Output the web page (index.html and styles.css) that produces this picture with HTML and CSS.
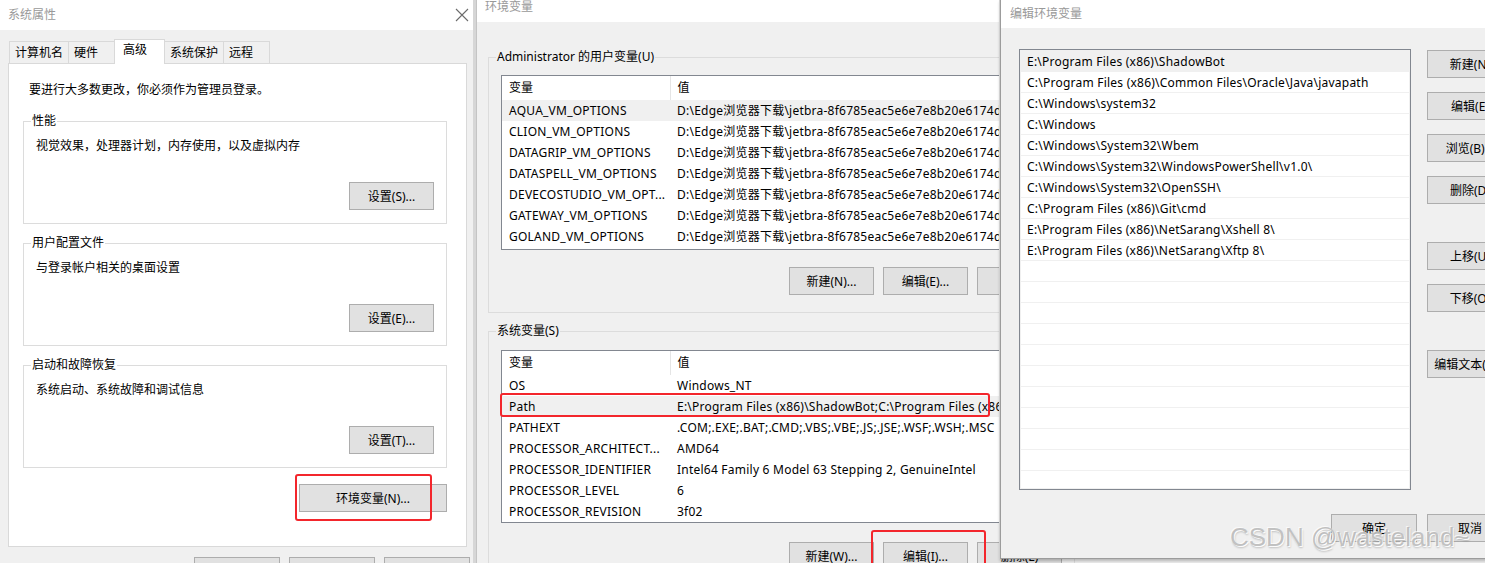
FILE: index.html
```html
<!DOCTYPE html>
<html lang="zh-CN">

<head>
    <meta charset="UTF-8">
    <meta name="viewport" content="width=device-width, initial-scale=1.0">
    <title>环境变量</title>
    <link rel="stylesheet" href="styles.css">
</head>

<body>
    <div class="desktop">

        <!-- 系统属性 -->
        <div class="window sysprops">
            <div class="titlebar">
                <span class="title">系统属性</span>
                <svg class="close" width="14" height="14" viewBox="0 0 14 14">
                    <path d="M1 1 L13 13 M13 1 L1 13" stroke="#6b6b6b" stroke-width="1.1" fill="none" />
                </svg>
            </div>
            <div class="body">
                <div class="tabs">
                    <div class="tab">计算机名</div>
                    <div class="tab">硬件</div>
                    <div class="tab active">高级</div>
                    <div class="tab">系统保护</div>
                    <div class="tab">远程</div>
                </div>
                <div class="tab-panel">
                    <p class="note">要进行大多数更改，你必须作为管理员登录。</p>

                    <fieldset class="group">
                        <legend>性能</legend>
                        <p>视觉效果，处理器计划，内存使用，以及虚拟内存</p>
                        <div class="actions"><button class="btn">设置(S)...</button></div>
                    </fieldset>

                    <fieldset class="group">
                        <legend>用户配置文件</legend>
                        <p>与登录帐户相关的桌面设置</p>
                        <div class="actions"><button class="btn">设置(E)...</button></div>
                    </fieldset>

                    <fieldset class="group">
                        <legend>启动和故障恢复</legend>
                        <p>系统启动、系统故障和调试信息</p>
                        <div class="actions"><button class="btn">设置(T)...</button></div>
                    </fieldset>

                    <div class="actions env-row"><button class="btn wide">环境变量(N)...</button></div>
                </div>
                <div class="dialog-buttons">
                    <button class="btn">确定</button>
                    <button class="btn">取消</button>
                    <button class="btn">应用(A)</button>
                </div>
            </div>
        </div>

        <!-- 环境变量 -->
        <div class="window envvars">
            <div class="titlebar short">
                <span class="title">环境变量</span>
            </div>
            <div class="body">
                <fieldset class="group">
                    <legend>Administrator 的用户变量(U)</legend>
                    <div class="listview user-list">
                        <table>
                            <thead>
                                <tr>
                                    <th class="col-name">变量</th>
                                    <th>值</th>
                                </tr>
                            </thead>
                            <tbody>
                                <tr class="selected">
                                    <td>AQUA_VM_OPTIONS</td>
                                    <td>D:\Edge浏览器下载\jetbra-8f6785eac5e6e7e8b20e6174dd28bb19d8\vmoptions\aqua.vmoptions</td>
                                </tr>
                                <tr>
                                    <td>CLION_VM_OPTIONS</td>
                                    <td>D:\Edge浏览器下载\jetbra-8f6785eac5e6e7e8b20e6174dd28bb19d8\vmoptions\clion.vmoptions</td>
                                </tr>
                                <tr>
                                    <td>DATAGRIP_VM_OPTIONS</td>
                                    <td>D:\Edge浏览器下载\jetbra-8f6785eac5e6e7e8b20e6174dd28bb19d8\vmoptions\datagrip.vmoptions</td>
                                </tr>
                                <tr>
                                    <td>DATASPELL_VM_OPTIONS</td>
                                    <td>D:\Edge浏览器下载\jetbra-8f6785eac5e6e7e8b20e6174dd28bb19d8\vmoptions\dataspell.vmoptions</td>
                                </tr>
                                <tr>
                                    <td>DEVECOSTUDIO_VM_OPT...</td>
                                    <td>D:\Edge浏览器下载\jetbra-8f6785eac5e6e7e8b20e6174dd28bb19d8\vmoptions\devecostudio.vmoptions</td>
                                </tr>
                                <tr>
                                    <td>GATEWAY_VM_OPTIONS</td>
                                    <td>D:\Edge浏览器下载\jetbra-8f6785eac5e6e7e8b20e6174dd28bb19d8\vmoptions\gateway.vmoptions</td>
                                </tr>
                                <tr>
                                    <td>GOLAND_VM_OPTIONS</td>
                                    <td>D:\Edge浏览器下载\jetbra-8f6785eac5e6e7e8b20e6174dd28bb19d8\vmoptions\goland.vmoptions</td>
                                </tr>
                            </tbody>
                        </table>
                    </div>
                    <div class="actions list-actions">
                        <button class="btn">新建(N)...</button>
                        <button class="btn">编辑(E)...</button>
                        <button class="btn">删除(D)</button>
                    </div>
                </fieldset>

                <fieldset class="group">
                    <legend>系统变量(S)</legend>
                    <div class="listview sys-list">
                        <table>
                            <thead>
                                <tr>
                                    <th class="col-name">变量</th>
                                    <th>值</th>
                                </tr>
                            </thead>
                            <tbody>
                                <tr>
                                    <td>OS</td>
                                    <td>Windows_NT</td>
                                </tr>
                                <tr class="selected">
                                    <td>Path</td>
                                    <td>E:\Program Files (x86)\ShadowBot;C:\Program Files (x86)\Common Files\Oracle\Java\javapath</td>
                                </tr>
                                <tr>
                                    <td>PATHEXT</td>
                                    <td>.COM;.EXE;.BAT;.CMD;.VBS;.VBE;.JS;.JSE;.WSF;.WSH;.MSC</td>
                                </tr>
                                <tr>
                                    <td>PROCESSOR_ARCHITECT...</td>
                                    <td>AMD64</td>
                                </tr>
                                <tr>
                                    <td>PROCESSOR_IDENTIFIER</td>
                                    <td>Intel64 Family 6 Model 63 Stepping 2, GenuineIntel</td>
                                </tr>
                                <tr>
                                    <td>PROCESSOR_LEVEL</td>
                                    <td>6</td>
                                </tr>
                                <tr>
                                    <td>PROCESSOR_REVISION</td>
                                    <td>3f02</td>
                                </tr>
                            </tbody>
                        </table>
                    </div>
                    <div class="actions list-actions">
                        <button class="btn">新建(W)...</button>
                        <button class="btn">编辑(I)...</button>
                        <button class="btn">删除(L)</button>
                    </div>
                </fieldset>
            </div>
        </div>

        <!-- 编辑环境变量 -->
        <div class="window editvar">
            <div class="titlebar tall">
                <span class="title">编辑环境变量</span>
            </div>
            <div class="body">
                <div class="edit-main">
                    <ul class="pathlist">
                        <li class="selected">E:\Program Files (x86)\ShadowBot</li>
                        <li>C:\Program Files (x86)\Common Files\Oracle\Java\javapath</li>
                        <li>C:\Windows\system32</li>
                        <li>C:\Windows</li>
                        <li>C:\Windows\System32\Wbem</li>
                        <li>C:\Windows\System32\WindowsPowerShell\v1.0\</li>
                        <li>C:\Windows\System32\OpenSSH\</li>
                        <li>C:\Program Files (x86)\Git\cmd</li>
                        <li>E:\Program Files (x86)\NetSarang\Xshell 8\</li>
                        <li>E:\Program Files (x86)\NetSarang\Xftp 8\</li>
                    </ul>
                    <div class="side-buttons">
                        <button class="btn">新建(N)</button>
                        <button class="btn">编辑(E)</button>
                        <button class="btn">浏览(B)...</button>
                        <button class="btn">删除(D)</button>
                        <button class="btn spaced">上移(U)</button>
                        <button class="btn">下移(O)</button>
                        <button class="btn spaced">编辑文本(T)...</button>
                    </div>
                </div>
                <div class="dialog-buttons">
                    <button class="btn">确定</button>
                    <button class="btn">取消</button>
                </div>
            </div>
        </div>

        <!-- annotations on top of the screenshot -->
        <div class="mark mark-env"></div>
        <div class="mark mark-path"></div>
        <div class="mark mark-edit"></div>

        <div class="watermark">CSDN @wasteland~</div>
    </div>
</body>

</html>
```

FILE: styles.css
```css
* {
    box-sizing: border-box;
}

body {
    margin: 0;
    font-family: "Noto Sans", "Noto Sans CJK SC", sans-serif;
    font-size: 12px;
    line-height: 16px;
    color: #000;
    background: #f0f0f0;
    overflow: hidden;
}

.desktop {
    position: relative;
    width: 1485px;
    height: 563px;
    overflow: hidden;
}

/* windows */

.window {
    position: absolute;
    top: 0;
    background: #f0f0f0;
}

.sysprops {
    left: 0;
    width: 476px;
    height: 600px;
    border-right: 3px solid #d6d6d6;
}

.envvars {
    left: 476px;
    width: 610px;
    height: 600px;
    border-left: 1px solid #c4c4c4;
}

.editvar {
    left: 1000px;
    width: 527px;
    height: 559px;
    border-left: 1px solid #9c9c9c;
    border-bottom: 1px solid #9c9c9c;
    box-shadow: -1px 0 0 #d0d0d0, 0 2px 3px rgba(0, 0, 0, 0.25);
}

.titlebar {
    display: flex;
    align-items: center;
    justify-content: space-between;
    height: 30px;
    padding: 0 4px 0 8px;
    background: #fff;
}

.titlebar.short {
    height: 22px;
    align-items: flex-start;
}

.titlebar.short .title {
    line-height: 14px;
}

.titlebar.tall {
    height: 28px;
    padding-left: 9px;
}

.title {
    color: #999;
}

.close {
    display: block;
}

/* buttons */

.btn {
    height: 28px;
    width: 85px;
    padding: 0;
    font-family: inherit;
    font-size: 12px;
    color: #000;
    background: #e1e1e1;
    border: 1px solid #adadad;
    white-space: nowrap;
}

.btn.wide {
    width: 148px;
}

.actions {
    display: flex;
    justify-content: flex-end;
    gap: 9px;
}

/* 系统属性 */

.sysprops .body {
    padding: 9px 6px 0 8px;
}

.tabs {
    display: flex;
    align-items: flex-end;
    height: 24px;
    padding-left: 1px;
}

.tab {
    height: 22px;
    min-width: 47px;
    padding: 0 5px;
    line-height: 21px;
    background: #f0f0f0;
    border: 1px solid #d9d9d9;
    border-bottom: none;
    white-space: nowrap;
}

.tab+.tab {
    margin-left: -1px;
}

.tab.active {
    position: relative;
    z-index: 1;
    height: 25px;
    min-width: 51px;
    margin-bottom: -1px;
    padding: 0 8px 3px;
    line-height: 19px;
    background: #fff;
}

.tab-panel {
    height: 484px;
    padding: 0 19px 0 14px;
    background: #fff;
    border: 1px solid #d9d9d9;
}

.note {
    margin: 18px 0 15px 6px;
}

.group {
    margin: 0;
    padding: 0 12px 13px;
    border: 1px solid #dcdcdc;
    min-width: 0;
}

.group+.group {
    margin-top: 11px;
}

.group legend {
    margin-left: -5px;
    padding: 0 1px;
    line-height: 16px;
}

.group p {
    margin: 9px 0 0;
}

.group p+.actions {
    margin-top: 28px;
}

.env-row {
    margin-top: 16px;
}

.dialog-buttons {
    display: flex;
    justify-content: flex-end;
    gap: 9px;
    margin-top: 10px;
}

.sysprops .dialog-buttons {
    margin-right: -3px;
}

.sysprops .dialog-buttons .btn {
    width: 86px;
}

/* 环境变量 */

.envvars .body {
    padding: 27px 11px 0;
}

.envvars .group {
    padding-bottom: 17px;
}

.envvars .group+.group {
    margin-top: 10px;
}

.listview {
    margin-top: 10px;
    background: #fff;
    border: 1px solid #828790;
    overflow: hidden;
}

.user-list {
    height: 175px;
}

.sys-list {
    height: 173px;
    margin-top: 11px;
}

.listview table {
    width: 100%;
    border-collapse: collapse;
    table-layout: fixed;
}

.listview th,
.listview td {
    padding: 0 0 0 7px;
    text-align: left;
    font-weight: normal;
    white-space: nowrap;
    overflow: hidden;
}

.listview td {
    height: 21px;
    letter-spacing: 0.23px;
}

.listview th {
    height: 24px;
}

.listview th.col-name {
    width: 168px;
    border-right: 1px solid #e5e5e5;
}

.listview tr.selected td {
    background: #f0f0f0;
}

.list-actions {
    margin-top: 17px;
}

.sys-list+.list-actions {
    margin-top: 19px;
}

/* 编辑环境变量 */

.editvar .body {
    padding: 21px 14px 0 18px;
}

.edit-main {
    display: flex;
    gap: 16px;
}

.pathlist {
    width: 392px;
    height: 441px;
    margin: 0;
    padding: 1px;
    list-style: none;
    background-color: #fff;
    background-image: repeating-linear-gradient(to bottom, transparent 0 20px, #f0f0f0 20px 21px);
    background-origin: content-box;
    background-clip: content-box;
    border: 1px solid #828790;
    overflow: hidden;
}

.pathlist li {
    height: 21px;
    padding-left: 6px;
    line-height: 21px;
    letter-spacing: 0.23px;
    white-space: nowrap;
}

.pathlist li.selected {
    background: #f0f0f0;
}

.side-buttons {
    display: flex;
    flex-direction: column;
    gap: 14px;
    width: 86px;
    padding-top: 1px;
}

.side-buttons .btn {
    width: 86px;
}

.side-buttons .spaced {
    margin-top: 24px;
}

.editvar .dialog-buttons {
    gap: 10px;
    margin-top: 24px;
}

.editvar .dialog-buttons .btn {
    width: 86px;
}

/* red boxes and watermark */

.mark {
    position: absolute;
    z-index: 5;
    border: 2px solid #f3262c;
    border-radius: 3px;
}

.mark-env {
    left: 295px;
    top: 474px;
    width: 137px;
    height: 47px;
}

.mark-path {
    left: 500px;
    top: 393px;
    width: 490px;
    height: 24px;
}

.mark-edit {
    left: 871px;
    top: 530px;
    width: 115px;
    height: 40px;
}

.watermark {
    position: absolute;
    z-index: 6;
    left: 1230px;
    top: 524px;
    font-family: "Liberation Sans", Arial, sans-serif;
    font-size: 26px;
    line-height: 26px;
    color: rgba(175, 175, 175, 0.75);
    text-shadow: 1px 1px 0 rgba(255, 255, 255, 0.95), -1px -1px 0 rgba(255, 255, 255, 0.7), 1px 2px 2px rgba(0, 0, 0, 0.2);
    white-space: nowrap;
}
```
